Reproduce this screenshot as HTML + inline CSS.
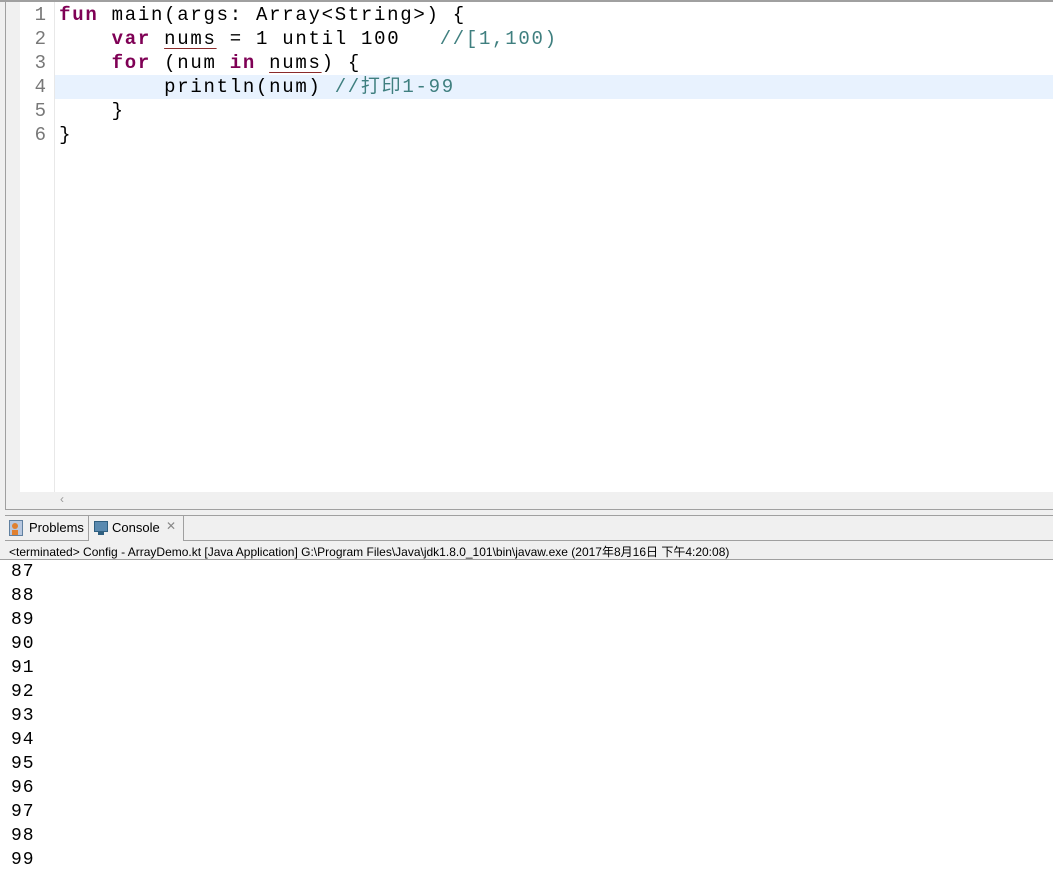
<!DOCTYPE html>
<html><head><meta charset="utf-8"><style>
body{margin:0;width:1053px;height:872px;overflow:hidden;background:#f0f0f0;position:relative;font-family:"Liberation Sans","Noto Sans CJK SC",sans-serif}
div{position:absolute;box-sizing:border-box}
.mono{font-family:"Liberation Mono","Noto Sans CJK SC",monospace;font-size:19px;letter-spacing:1.72px;white-space:pre}
.k{color:#7f0055;font-weight:bold}
.c{color:#3f7f7f}
.u{text-decoration:underline;text-decoration-color:#8b2a2a;text-underline-offset:4px}
.ln{color:#787878;width:40px;text-align:right;letter-spacing:0;display:inline-block}
</style></head><body>
<div style="left:0;top:0;width:1053px;height:2px;background:#a0a0a0"></div>
<div style="left:5px;top:2px;width:1px;height:508px;background:#a0a0a0"></div>
<div style="left:20px;top:2px;width:1033px;height:490px;background:#fff"></div>
<div style="left:54px;top:2px;width:1px;height:490px;background:#e8e8e8"></div>
<div style="left:55px;top:75px;width:998px;height:24px;background:#e8f2fe"></div>
<div style="left:5px;top:509px;width:1048px;height:1px;background:#a0a0a0"></div>
<div style="left:60px;top:492px;font-size:12px;color:#999">&lsaquo;</div>
<div class="mono" style="left:6px;top:3px;line-height:24px"><span class="ln">1</span> <span class="k">fun</span> main(args: Array&lt;String&gt;) {
<span class="ln">2</span>     <span class="k">var</span> <span class="u">nums</span> = 1 until 100   <span class="c">//[1,100)</span>
<span class="ln">3</span>     <span class="k">for</span> (num <span class="k">in</span> <span class="u">nums</span>) {
<span class="ln">4</span>         println(num) <span class="c">//打印1-99</span>
<span class="ln">5</span>     }
<span class="ln">6</span> }</div>
<div style="left:5px;top:515px;width:1048px;height:1px;background:#a0a0a0"></div>
<div style="left:5px;top:540px;width:1048px;height:1px;background:#a0a0a0"></div>
<div style="left:88px;top:515px;width:96px;height:26px;border:1px solid #a0a0a0;border-bottom:none;background:#f0f0f0"></div>
<div style="left:9px;top:520px;width:14px;height:16px;background:#b8c8e0;border:1px solid #6080a0"><div style="left:2px;top:2px;width:6px;height:6px;border-radius:3px;background:#e08030"></div><div style="left:2px;top:9px;width:6px;height:5px;background:#e08030"></div></div>
<div style="left:29px;top:520px;font-size:13px;color:#000">Problems</div>
<div style="left:94px;top:521px;width:14px;height:11px;background:#5a8ab0;border:1px solid #2f5f80"></div>
<div style="left:98px;top:532px;width:6px;height:3px;background:#2f5f80"></div>
<div style="left:112px;top:520px;font-size:13px;color:#000">Console</div>
<div style="left:166px;top:519px;font-size:12px;color:#888">✕</div>
<div style="left:9px;top:543px;font-size:12px;color:#000;white-space:pre">&lt;terminated&gt; Config - ArrayDemo.kt [Java Application] G:\Program Files\Java\jdk1.8.0_101\bin\javaw.exe (2017年8月16日 下午4:20:08)</div>
<div style="left:0;top:559px;width:1053px;height:1px;background:#a0a0a0"></div>
<div style="left:0;top:560px;width:1053px;height:312px;background:#fff"></div>
<div class="mono" style="left:11px;top:560px;line-height:24px;font-size:18px;letter-spacing:1px;color:#000">87
88
89
90
91
92
93
94
95
96
97
98
99</div>
</body></html>
